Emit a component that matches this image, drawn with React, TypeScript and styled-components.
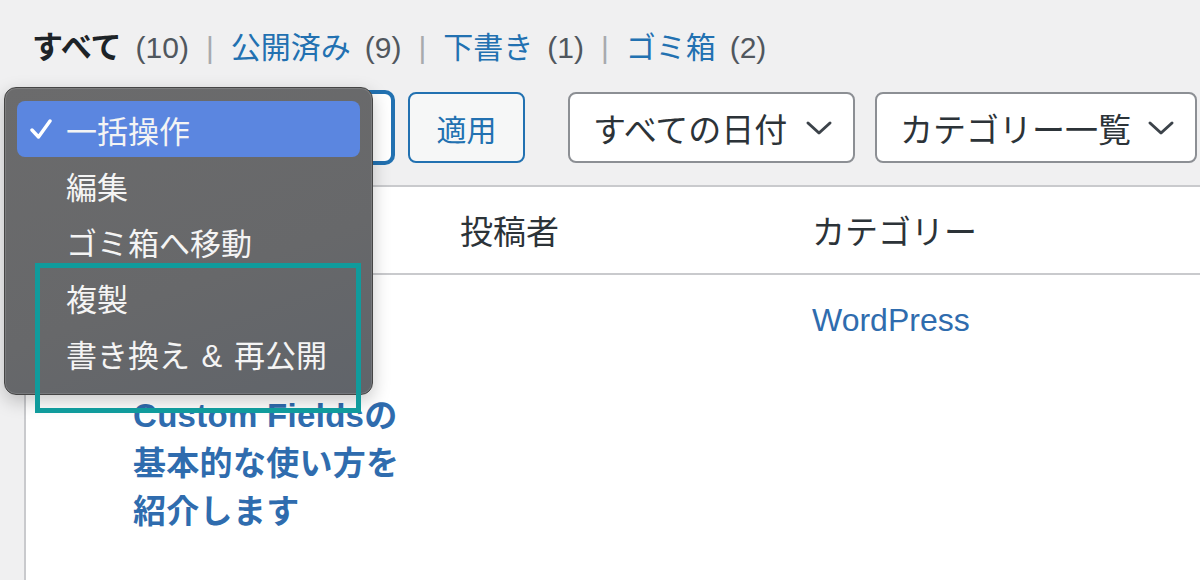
import React from "react";
import styled, { createGlobalStyle } from "styled-components";

const GlobalStyle = createGlobalStyle`
  html, body { margin: 0; padding: 0; background: #f0f0f1; }
  body {
    width: 1200px;
    height: 580px;
    overflow: hidden;
    font-family: "Liberation Sans", "Noto Sans CJK JP", sans-serif;
  }
`;

const Page = styled.div`
  position: relative;
  width: 1200px;
  height: 580px;
  overflow: hidden;
  box-sizing: border-box;
  padding-top: 28px;
  background: #f0f0f1;
`;

const StatusList = styled.ul`
  list-style: none;
  margin: 0;
  padding: 0 0 0 32px;
  display: flex;
  align-items: center;
  height: 40px;
  font-size: 30px;
  line-height: 40px;
  color: #50575e;
`;

const StatusItem = styled.li`
  display: flex;
  align-items: center;
  gap: 14px;
`;

const StatusLabel = styled.span<{ $current?: boolean }>`
  color: ${(p) => (p.$current ? "#1d2327" : "#2271b1")};
  font-weight: ${(p) => (p.$current ? 700 : 400)};
  font-size: ${(p) => (p.$current ? 31 : 30)}px;
`;

const Count = styled.span`
  color: #50575e;
`;

const Sep = styled.li`
  color: #a7aaad;
  margin: 0 17px;
`;

const Toolbar = styled.div`
  display: flex;
  align-items: stretch;
  gap: 43px;
  height: 71px;
  margin-top: 24px;
  padding-left: 24px;
`;

const Group = styled.div<{ $gap: number }>`
  display: flex;
  align-items: stretch;
  gap: ${(p) => p.$gap}px;
`;

const SelectBox = styled.div<{ $w: number; $focused?: boolean }>`
  width: ${(p) => p.$w}px;
  box-sizing: border-box;
  display: flex;
  align-items: center;
  justify-content: space-between;
  padding: 0 20px 0 23px;
  background: #fff;
  border: 2px solid ${(p) => (p.$focused ? "#2271b1" : "#8c8f94")};
  box-shadow: ${(p) => (p.$focused ? "0 0 0 2px #2271b1" : "none")};
  border-radius: 8px;
  font-size: 33px;
  color: #2c3338;
  white-space: nowrap;
`;

const ApplyButton = styled.button`
  width: 117px;
  box-sizing: border-box;
  background: #f6f7f7;
  border: 2px solid #2271b1;
  border-radius: 8px;
  color: #2271b1;
  font-family: inherit;
  font-size: 30px;
  padding: 0;
`;

const Chevron = () => (
  <svg width="28" height="16" viewBox="0 0 28 16" fill="none">
    <polyline
      points="3,3 14,13 25,3"
      stroke="#3c434a"
      strokeWidth="3"
      strokeLinecap="round"
      strokeLinejoin="round"
    />
  </svg>
);

const Table = styled.table`
  margin: 22px 0 0 24px;
  width: 1200px;
  border-collapse: collapse;
  background: #fff;
  border-top: 2px solid #c9cacd;
  border-left: 2px solid #c9cacd;
  table-layout: fixed;
`;

const Col = styled.col<{ $w: number }>`
  width: ${(p) => p.$w}px;
`;

const Th = styled.th`
  height: 86px;
  padding: 0 22px;
  text-align: left;
  font-weight: 400;
  font-size: 33px;
  color: #2c3338;
  border-bottom: 2px solid #c9cacd;
`;

const Td = styled.td<{ $skipLines?: number }>`
  vertical-align: top;
  padding: ${(p) => 21 + (p.$skipLines ?? 0) * 48}px 22px 21px;
  height: 300px;
  line-height: 48px;
`;

const TitleLink = styled.a`
  display: block;
  color: #2f6cae;
  font-weight: 700;
  font-size: 33px;
  line-height: 48px;
  letter-spacing: 0.3px;
  text-decoration: none;
`;

const CatLink = styled.a`
  color: #2f6cae;
  font-size: 32px;
  line-height: 48px;
  text-decoration: none;
`;

const Menu = styled.ul`
  position: absolute;
  left: 4px;
  top: 87px;
  width: 369px;
  height: 308px;
  box-sizing: border-box;
  margin: 0;
  padding: 13px 12px;
  list-style: none;
  border-radius: 12px;
  background: linear-gradient(160deg, #6b6b6c 0%, #67686a 60%, #60646a 100%);
  border: 1px solid #454545;
  box-shadow: inset 0 0 0 1px rgba(255, 255, 255, 0.12),
    0 6px 18px rgba(0, 0, 0, 0.22);
`;

const MenuItem = styled.li<{ $selected?: boolean }>`
  display: flex;
  align-items: center;
  height: 56px;
  padding-left: 13px;
  border-radius: 8px;
  background: ${(p) => (p.$selected ? "#5b86e0" : "transparent")};
  color: #f4f4f4;
  font-size: 31px;
  white-space: pre;
  word-spacing: 3px;
`;

const CheckSlot = styled.span`
  width: 36px;
  display: flex;
  align-items: center;
`;

const Check = () => (
  <svg width="22" height="22" viewBox="0 0 22 22" fill="none">
    <polyline
      points="2,12 8.5,19 20,3"
      stroke="#ffffff"
      strokeWidth="3.4"
      strokeLinecap="round"
      strokeLinejoin="round"
    />
  </svg>
);

const Highlight = styled.div`
  position: absolute;
  left: 35px;
  top: 263px;
  width: 326px;
  height: 150px;
  box-sizing: border-box;
  border: 5px solid #109b9c;
  pointer-events: none;
`;

const menuItems = ["一括操作", "編集", "ゴミ箱へ移動", "複製", "書き換え & 再公開"];

export default function App() {
  return (
    <>
      <GlobalStyle />
      <Page>
        <StatusList>
          <StatusItem>
            <StatusLabel $current>すべて</StatusLabel>
            <Count>(10)</Count>
          </StatusItem>
          <Sep>|</Sep>
          <StatusItem>
            <StatusLabel>公開済み</StatusLabel>
            <Count>(9)</Count>
          </StatusItem>
          <Sep>|</Sep>
          <StatusItem>
            <StatusLabel>下書き</StatusLabel>
            <Count>(1)</Count>
          </StatusItem>
          <Sep>|</Sep>
          <StatusItem>
            <StatusLabel>ゴミ箱</StatusLabel>
            <Count>(2)</Count>
          </StatusItem>
        </StatusList>

        <Toolbar>
          <Group $gap={15}>
            <SelectBox $w={369} $focused />
            <ApplyButton>適用</ApplyButton>
          </Group>
          <Group $gap={20}>
            <SelectBox $w={287}>
              すべての日付
              <Chevron />
            </SelectBox>
            <SelectBox $w={322}>
              カテゴリー一覧
              <Chevron />
            </SelectBox>
          </Group>
        </Toolbar>

        <Table>
          <colgroup>
            <Col $w={86} />
            <Col $w={327} />
            <Col $w={352} />
            <Col $w={435} />
          </colgroup>
          <thead>
            <tr>
              <Th></Th>
              <Th></Th>
              <Th>投稿者</Th>
              <Th>カテゴリー</Th>
            </tr>
          </thead>
          <tbody>
            <tr>
              <Td></Td>
              <Td $skipLines={2}>
                <TitleLink>
                  Custom Fieldsの
                  <br />
                  基本的な使い方を
                  <br />
                  紹介します
                </TitleLink>
              </Td>
              <Td></Td>
              <Td>
                <CatLink>WordPress</CatLink>
              </Td>
            </tr>
          </tbody>
        </Table>

        <Menu>
          {menuItems.map((label, i) => (
            <MenuItem key={label} $selected={i === 0}>
              <CheckSlot>{i === 0 && <Check />}</CheckSlot>
              {label}
            </MenuItem>
          ))}
        </Menu>
        <Highlight />
      </Page>
    </>
  );
}
